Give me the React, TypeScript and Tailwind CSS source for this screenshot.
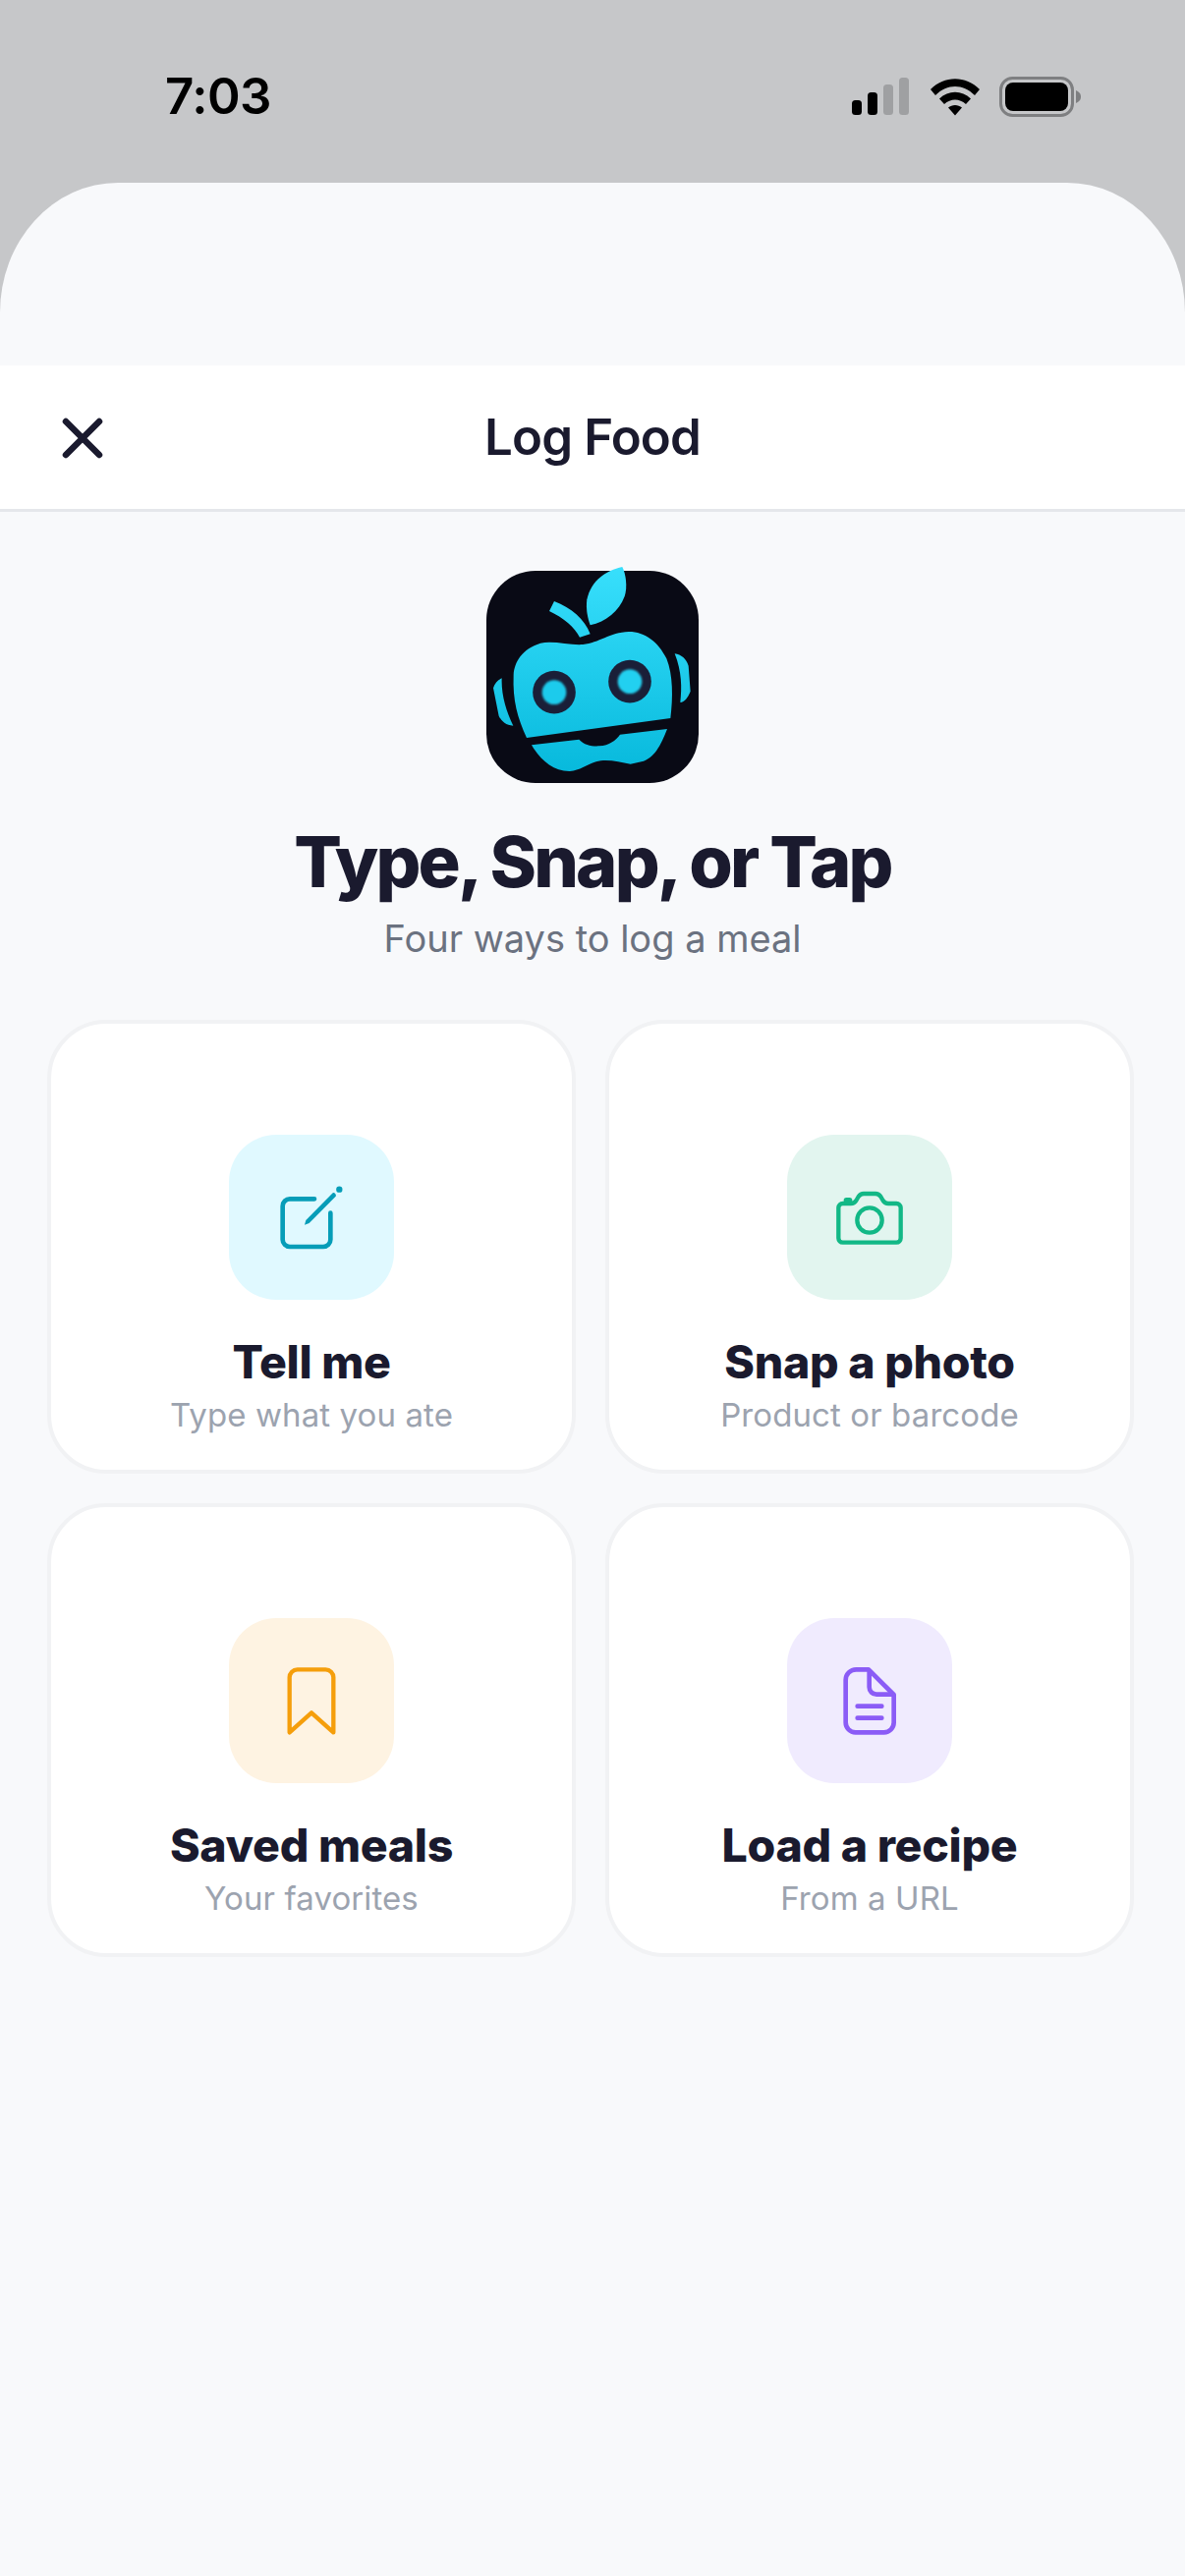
import React from "react";

const font = "font-['Inter','Noto_Sans',sans-serif]";

function Signal() {
  return (
    <svg width="60" height="40" viewBox="0 0 60 40" className="block">
      <rect x="0" y="23" width="10" height="15" rx="3.5" fill="#000" />
      <rect x="16" y="15" width="10" height="23" rx="3.5" fill="#000" />
      <rect x="32" y="7" width="10" height="31" rx="3.5" fill="#9fa0a2" />
      <rect x="48" y="0" width="10" height="38" rx="3.5" fill="#9fa0a2" />
    </svg>
  );
}

function Wifi() {
  return (
    <svg width="50" height="38" viewBox="0 0 50 38" className="block">
      <path d="M0 11 C14 -3.500 36 -3.500 50 11 L45 17 C33 5 17 5 5 17 Z" fill="#000" />
      <path d="M9 20.500 C18 11.500 32 11.500 41 20.500 L36 26 C29.500 20 20.500 20 14 26 Z" fill="#000" />
      <path d="M18 29.500 C22 26 28 26 32 29.500 L25 37.500 Z" fill="#000" />
    </svg>
  );
}

function Battery() {
  return (
    <svg width="84" height="41" viewBox="0 0 84 41" className="block">
      <rect x="1.500" y="1.500" width="73" height="38" rx="12" fill="none" stroke="#7e7f81" strokeWidth="3" />
      <rect x="6" y="6" width="64" height="29" rx="8" fill="#000" />
      <path d="M78 14 C82 16 83 18 83 20.500 C83 23 82 25 78 27 Z" fill="#7e7f81" />
    </svg>
  );
}

function Logo() {
  return (
    <svg width="216" height="216" viewBox="75 62 648 648" className="block overflow-visible">
      <defs>
        <linearGradient id="robot" gradientUnits="userSpaceOnUse" x1="0" y1="50" x2="0" y2="680">
          <stop offset="0" stopColor="#38dffc" />
          <stop offset="1" stopColor="#07b9dc" />
        </linearGradient>
        <filter id="soft" x="-30%" y="-30%" width="160%" height="160%">
          <feGaussianBlur stdDeviation="3.5" />
        </filter>
      </defs>
      <rect x="75" y="62" width="648" height="648" rx="150" fill="#090a15" />
      <g fill="url(#robot)">
        <path d="M490 50 C440 62 395 90 382 150 C378 180 385 210 392 228 C440 218 480 185 497 140 C507 110 500 70 490 50 Z" />
        <path d="M282 155 L267 185 C310 205 345 235 360 265 L392 255 C375 210 335 175 282 155 Z" />
        <path d="M198 572 C170 510 155 460 158 380 C160 340 185 300 240 283 C280 275 330 290 370 287 C420 282 450 250 510 248 C560 248 600 280 625 330 C645 380 645 450 637 512 Z" />
        <path d="M213 594 L358 577 C375 595 395 598 420 597 C450 595 470 580 483 562 L627 545 C610 590 590 630 555 643 L515 652 C480 645 440 635 410 645 C380 655 360 672 330 674 C280 675 240 640 213 594 Z" />
        <path d="M122 390 C110 395 100 405 96 420 L113 505 C120 520 135 535 157 535 C135 490 120 440 122 390 Z" />
        <path d="M650 315 C670 318 685 330 692 352 L698 430 C690 450 680 462 667 464 C672 420 672 370 650 315 Z" />
      </g>
      <circle cx="282" cy="433" r="65.500" fill="#1a1f38" />
      <circle cx="513" cy="400" r="65.500" fill="#1a1f38" />
      <circle cx="282" cy="433" r="37" fill="#1fcbec" filter="url(#soft)" />
      <circle cx="513" cy="400" r="37" fill="#24d0f0" filter="url(#soft)" />
    </svg>
  );
}

function EditIcon() {
  return (
    <svg width="84" height="84" viewBox="225 201 252 252" className="block" fill="none">
      <path d="M360 271 H285 a22 22 0 0 0 -22 22 V395 a22 22 0 0 0 22 22 H387 a22 22 0 0 0 22 -22 V314" stroke="#069db8" strokeWidth="14" strokeLinecap="round" />
      <path d="M330 350 L334 336 L416 253 C420 250 428 258 425 263 L344 345 Z" fill="#069db8" />
      <circle cx="436" cy="242" r="9.500" fill="#069db8" />
    </svg>
  );
}

function CameraIcon() {
  return (
    <svg width="84" height="84" viewBox="189 201 252 252" className="block" fill="none">
      <path d="M233 285 H258 C265 285 270 282 274 276 L281 264 C285 258 290 255 297 255 H333 C340 255 345 258 349 264 L356 276 C360 282 365 285 372 285 H397 A13 13 0 0 1 410 298 V391 A13 13 0 0 1 397 404 H233 A13 13 0 0 1 220 391 V298 A13 13 0 0 1 233 285 Z" stroke="#12b886" strokeWidth="13" strokeLinejoin="round" />
      <rect x="236" y="267" width="26" height="18" rx="8" fill="#12b886" />
      <circle cx="315" cy="336" r="38" stroke="#12b886" strokeWidth="13" />
    </svg>
  );
}

function BookmarkIcon() {
  return (
    <svg width="84" height="84" viewBox="225 177 252 252" className="block" fill="none">
      <path d="M284 400 V232 a24 24 0 0 1 24 -24 H394 a24 24 0 0 1 24 24 V400 L351 340 Z" stroke="#f59e0b" strokeWidth="13" strokeLinejoin="round" />
    </svg>
  );
}

function DocIcon() {
  return (
    <svg width="84" height="84" viewBox="189 177 252 252" className="block" fill="none">
      <path d="M242 240 a32 32 0 0 1 32 -32 H312 L389 285 V370 a30 30 0 0 1 -30 30 H272 a30 30 0 0 1 -30 -30 Z" stroke="#8b5cf6" strokeWidth="14" strokeLinejoin="round" />
      <path d="M314 212 V262 a22 22 0 0 0 22 22 H386" stroke="#8b5cf6" strokeWidth="14" />
      <path d="M278 320 H352 M278 356 H352" stroke="#8b5cf6" strokeWidth="14" strokeLinecap="round" />
    </svg>
  );
}

function Card({ icon, tint, title, sub }: { icon: React.ReactNode; tint: string; title: string; sub: string }) {
  return (
    <div className="flex h-[462px] flex-col items-center rounded-[60px] border-[4.5px] border-[#f1f2f4] bg-white pt-[112.5px]">
      <div className={`flex h-[168px] w-[168px] items-center justify-center rounded-[48px] ${tint}`}>{icon}</div>
      <div className="mt-[32px] text-[46.5px] leading-[62px] font-extrabold tracking-[-0.3px] text-[#1a1a2e]">{title}</div>
      <div className="text-[33px] leading-[46px] tracking-[0.1px] text-[#9ca3af]">{sub}</div>
    </div>
  );
}

export default function App() {
  return (
    <div className={`h-[2622px] w-[1206px] overflow-hidden bg-[#c6c7c9] ${font}`}>
      <div className="flex h-[186px] items-start justify-between pt-[70px] pr-[105px] pl-[168px]">
        <div className="text-[51px] leading-[56px] font-semibold tracking-[-0.5px] text-black">7:03</div>
        <div className="flex items-center gap-[20px] pt-[8px]">
          <Signal />
          <Wifi />
          <Battery />
        </div>
      </div>
      <div className="h-[2436px] rounded-t-[120px_132px] bg-[#f8f9fb] pt-[186px]">
        <div className="relative flex h-[149px] items-center justify-center border-b-[3px] border-[#e5e7eb] bg-white">
          <svg width="44" height="44" viewBox="0 0 44 44" className="absolute top-[52px] left-[62px]" fill="none">
            <path d="M5 5 L39 39 M39 5 L5 39" stroke="#1a1a2e" strokeWidth="6.500" strokeLinecap="round" />
          </svg>
          <div className="text-[51px] leading-[62px] font-semibold tracking-[-0.85px] text-[#1a1a2e]">Log Food</div>
        </div>
        <div className="flex flex-col items-center px-[48px] pt-[60px]">
          <Logo />
          <div className="mt-[36px] text-[72px] leading-[88px] font-extrabold tracking-[-2.8px] text-[#1a1a2e]">Type, Snap, or Tap</div>
          <div className="mt-[9px] text-[38px] leading-[50px] text-[#6b7280]">Four ways to log a meal</div>
          <div className="mt-[58px] grid w-[1106px] grid-cols-2 gap-[30px] self-start">
            <Card icon={<EditIcon />} tint="bg-[#e0f9ff]" title="Tell me" sub="Type what you ate" />
            <Card icon={<CameraIcon />} tint="bg-[#e2f5ef]" title="Snap a photo" sub="Product or barcode" />
            <Card icon={<BookmarkIcon />} tint="bg-[#fef3e2]" title="Saved meals" sub="Your favorites" />
            <Card icon={<DocIcon />} tint="bg-[#f0ebfe]" title="Load a recipe" sub="From a URL" />
          </div>
        </div>
      </div>
    </div>
  );
}
